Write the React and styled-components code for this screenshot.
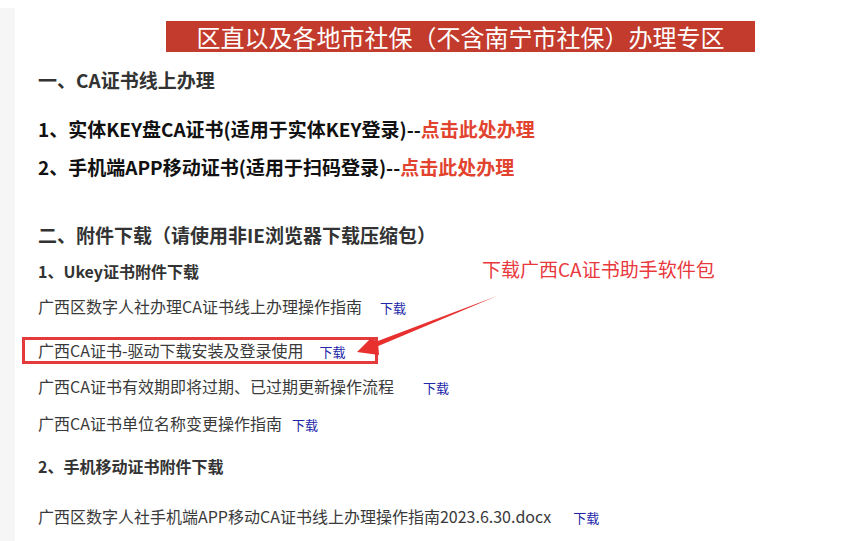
import React from 'react';
import styled, { createGlobalStyle } from 'styled-components';

const GlobalStyle = createGlobalStyle`
  html, body {
    margin: 0;
    padding: 0;
    background: #ffffff;
  }
  body {
    font-family: "Noto Sans CJK SC", "Noto Sans", sans-serif;
  }
`;

const rows = [
  { name: '广西区数字人社办理CA证书线上办理操作指南', gap: 18, top: 11 },
  { name: '广西CA证书-驱动下载安装及登录使用', gap: 16, boxed: true },
  { name: '广西CA证书有效期即将过期、已过期更新操作流程', gap: 29, top: 10 },
  { name: '广西CA证书单位名称变更操作指南', gap: 10, top: 13 }
];

export default function App() {
  return (
    <>
      <GlobalStyle />
      <Page>
        <Gutter />
        <Content>
          <Banner>区直以及各地市社保（不含南宁市社保）办理专区</Banner>

          <SectionTitle top={14}>一、CA证书线上办理</SectionTitle>
          <Item top={20}>
            1、实体KEY盘CA证书(适用于实体KEY登录)--<Action>点击此处办理</Action>
          </Item>
          <Item top={8}>
            2、手机端APP移动证书(适用于扫码登录)--<Action>点击此处办理</Action>
          </Item>

          <SectionTitle top={39}>二、附件下载（请使用非IE浏览器下载压缩包）</SectionTitle>
          <SubRow>
            <SubTitle>1、Ukey证书附件下载</SubTitle>
            <Note>下载广西CA证书助手软件包</Note>
          </SubRow>

          {rows.map((row) =>
            row.boxed ? (
              <Boxed key={row.name}>
                {row.name}
                <Download gap={row.gap}>下载</Download>
              </Boxed>
            ) : (
              <FileRow key={row.name} top={row.top}>
                {row.name}
                <Download gap={row.gap}>下载</Download>
              </FileRow>
            )
          )}

          <SubTitle top={19}>2、手机移动证书附件下载</SubTitle>
          <FileRow top={26}>
            广西区数字人社手机端APP移动CA证书线上办理操作指南2023.6.30.docx
            <Download gap={22}>下载</Download>
          </FileRow>
        </Content>

        <Arrow viewBox="0 0 852 541" width="852" height="541">
          <polygon
            points="357,352 371,338 376.5,341.4 497,296 378.3,346 379,355"
            fill="#e8302f"
          />
        </Arrow>
      </Page>
    </>
  );
}

const Page = styled.div`
  position: relative;
  display: flex;
  width: 852px;
  height: 541px;
  overflow: hidden;
  background: #ffffff;
`;

const Gutter = styled.div`
  flex: 0 0 15px;
  margin-top: 8px;
  background: #f6f6f6;
`;

const Content = styled.div`
  flex: 1;
  display: flex;
  flex-direction: column;
  align-items: flex-start;
  padding-left: 23px;
`;

const Banner = styled.div`
  margin: 21px 0 0 128px;
  width: 589px;
  height: 31px;
  background: #c23b2c;
  color: #ffffff;
  font-size: 24px;
  line-height: 31px;
  text-align: center;
  white-space: nowrap;
`;

const SectionTitle = styled.div`
  margin-top: ${({ top }) => top}px;
  height: 28px;
  font-size: 19px;
  font-weight: 700;
  line-height: 28px;
  color: #333333;
  white-space: nowrap;
`;

const Item = styled.div`
  margin-top: ${({ top }) => top}px;
  height: 30px;
  font-size: 19px;
  font-weight: 700;
  line-height: 30px;
  color: #111111;
  white-space: nowrap;
`;

const Action = styled.span`
  color: #e2432f;
`;

const SubRow = styled.div`
  display: grid;
  grid-template-columns: 444px auto;
  align-items: center;
  margin-top: 10px;
  height: 24px;
`;

const SubTitle = styled.div`
  margin-top: ${({ top }) => top || 0}px;
  height: 24px;
  font-size: 16px;
  font-weight: 700;
  line-height: 24px;
  color: #333333;
  white-space: nowrap;
`;

const Note = styled.div`
  font-size: 19px;
  line-height: 24px;
  color: #e8383d;
  white-space: nowrap;
  margin-top: -4px;
`;

const FileRow = styled.div`
  margin-top: ${({ top }) => top}px;
  height: 24px;
  font-size: 16px;
  line-height: 24px;
  color: #3a3a3a;
  white-space: nowrap;
`;

const Boxed = styled.div`
  box-sizing: border-box;
  margin: 19px 0 0 -16px;
  width: 356px;
  height: 27px;
  padding-left: 13px;
  border: 3px solid #e33a3c;
  font-size: 16px;
  line-height: 21px;
  color: #3a3a3a;
  white-space: nowrap;
`;

const Download = styled.span`
  margin-left: ${({ gap }) => gap}px;
  font-size: 13px;
  line-height: 1;
  color: #2126a8;
`;

const Arrow = styled.svg`
  position: absolute;
  left: 0;
  top: 0;
  pointer-events: none;
`;
